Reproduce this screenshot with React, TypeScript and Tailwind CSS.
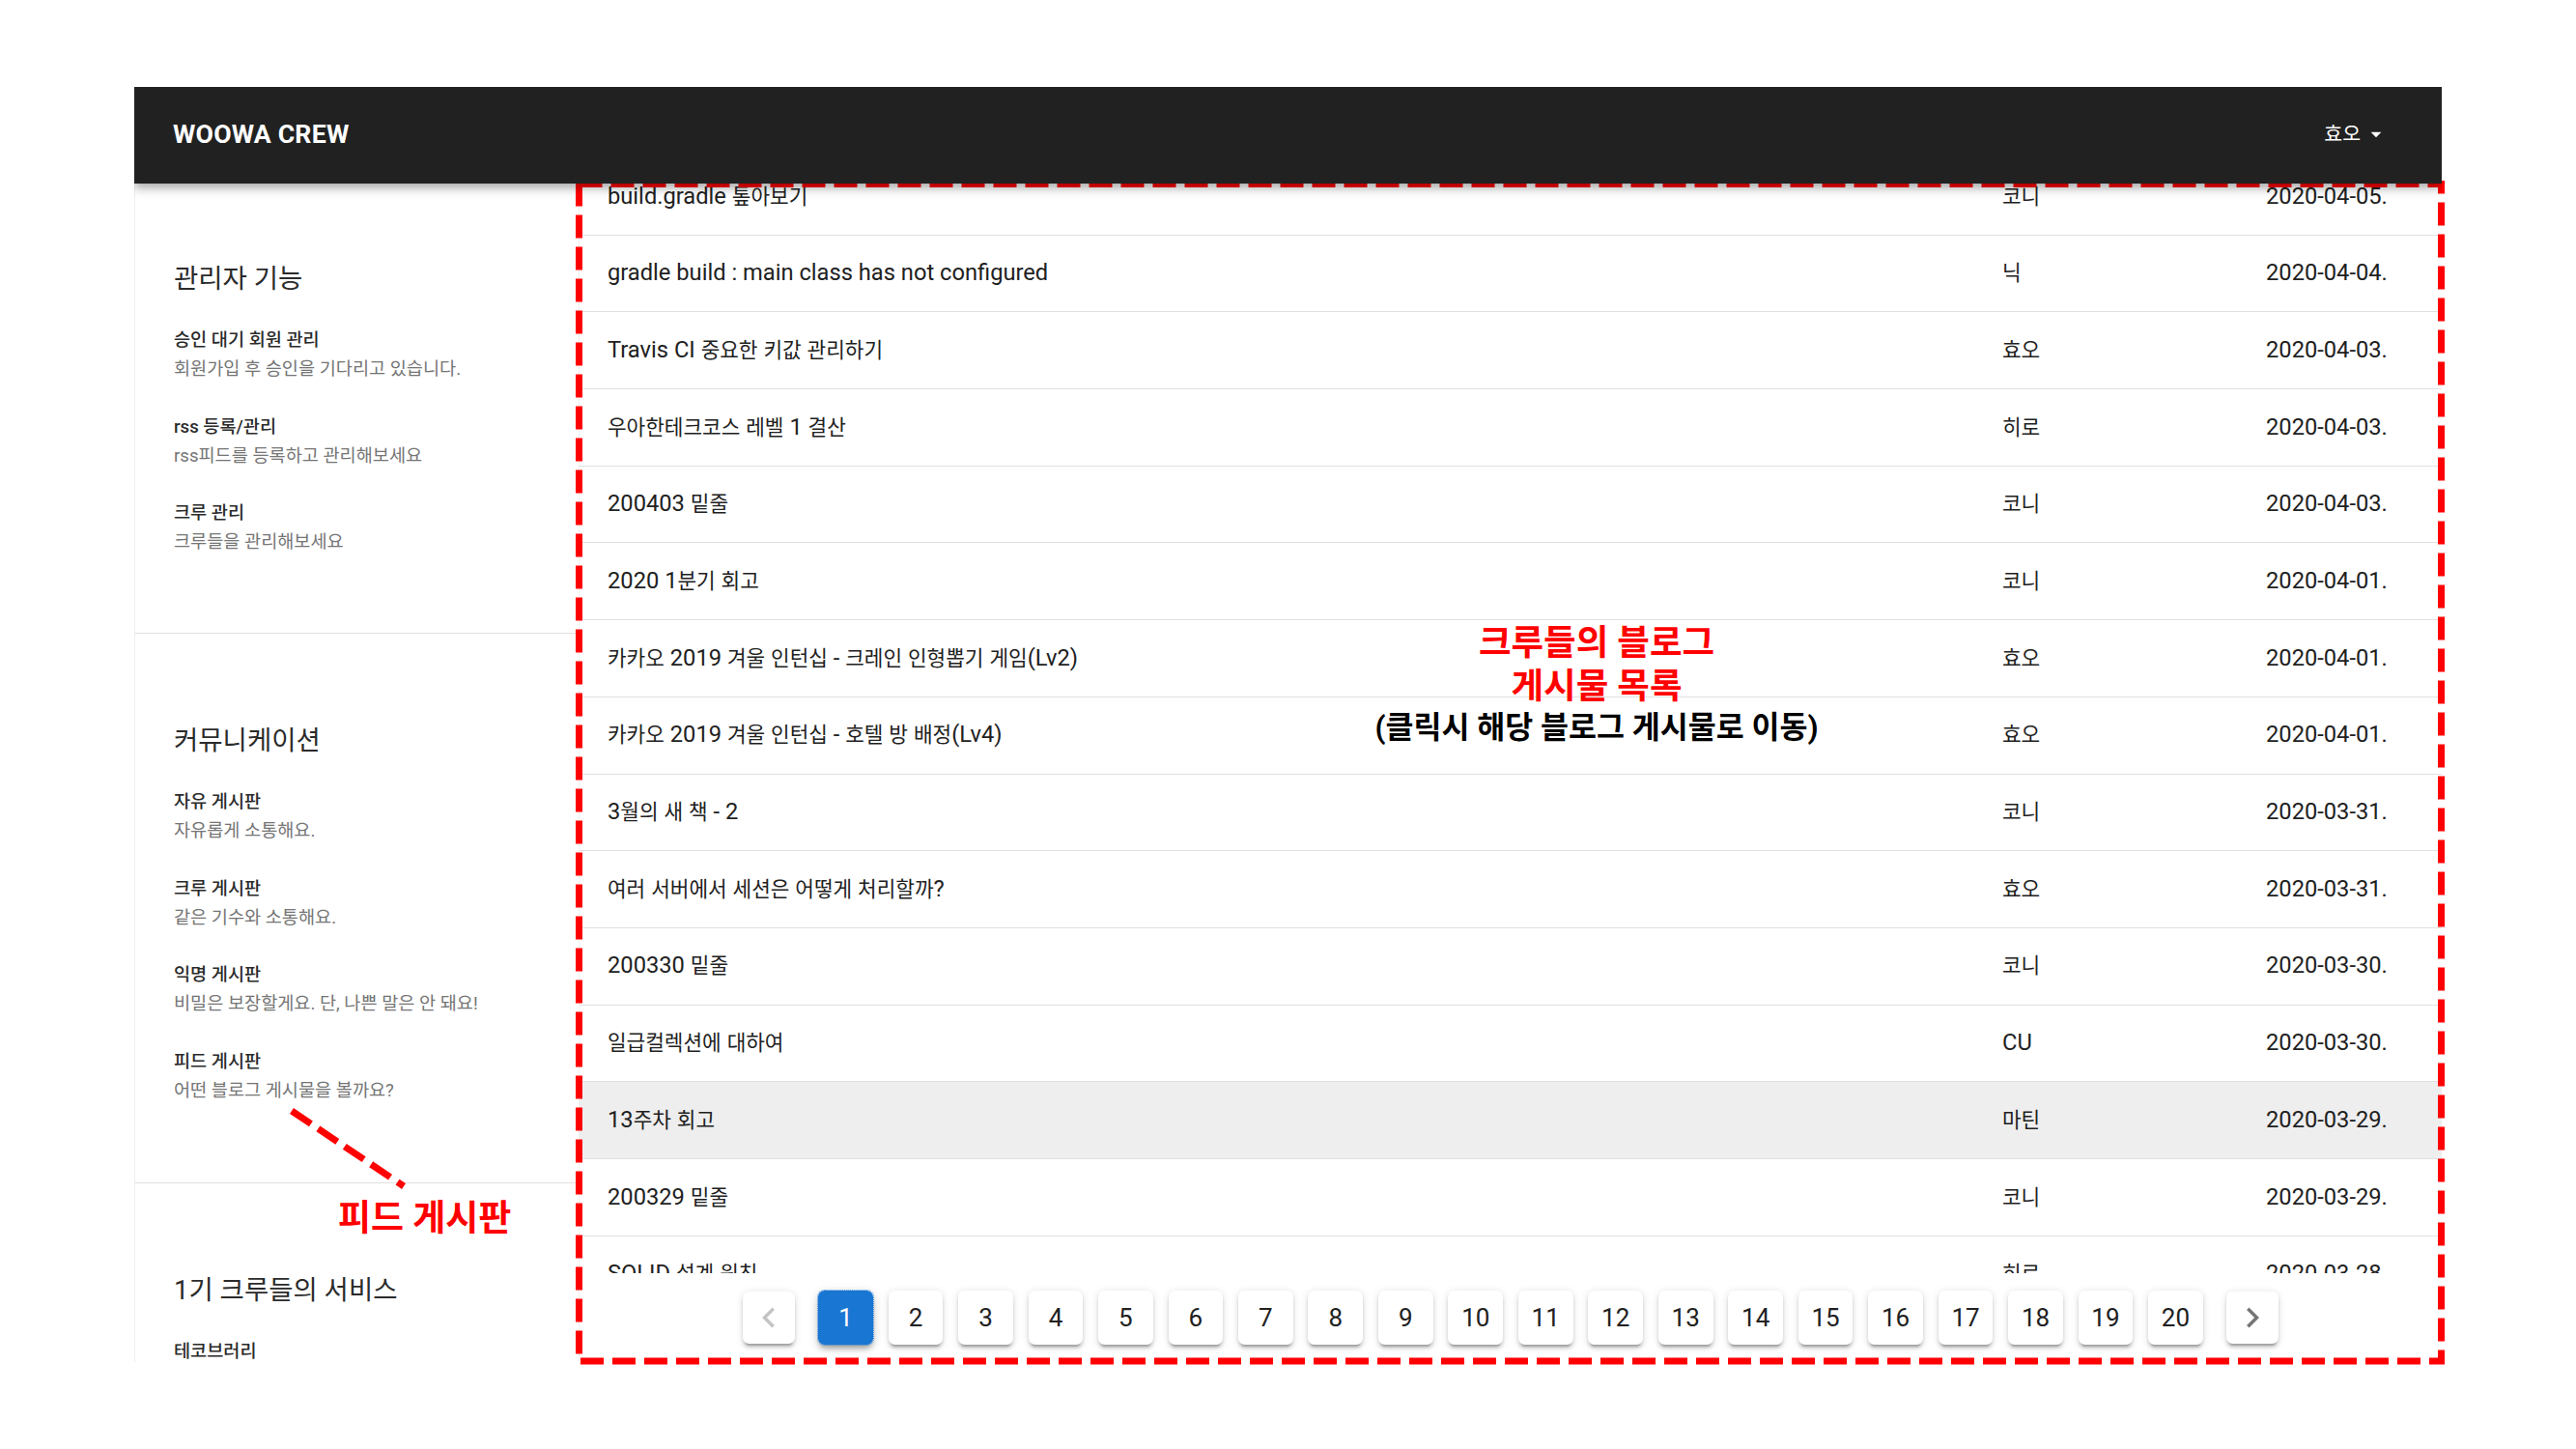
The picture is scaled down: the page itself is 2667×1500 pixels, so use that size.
import React from "react";

type Post = [string, string, string];

const posts: Post[] = [
  ["build.gradle 톺아보기", "코니", "2020-04-05."],
  ["gradle build : main class has not configured", "닉", "2020-04-04."],
  ["Travis CI 중요한 키값 관리하기", "효오", "2020-04-03."],
  ["우아한테크코스 레벨 1 결산", "히로", "2020-04-03."],
  ["200403 밑줄", "코니", "2020-04-03."],
  ["2020 1분기 회고", "코니", "2020-04-01."],
  ["카카오 2019 겨울 인턴십 - 크레인 인형뽑기 게임(Lv2)", "효오", "2020-04-01."],
  ["카카오 2019 겨울 인턴십 - 호텔 방 배정(Lv4)", "효오", "2020-04-01."],
  ["3월의 새 책 - 2", "코니", "2020-03-31."],
  ["여러 서버에서 세션은 어떻게 처리할까?", "효오", "2020-03-31."],
  ["200330 밑줄", "코니", "2020-03-30."],
  ["일급컬렉션에 대하여", "CU", "2020-03-30."],
  ["13주차 회고", "마틴", "2020-03-29."],
  ["200329 밑줄", "코니", "2020-03-29."],
  ["SOLID 설계 원칙", "히로", "2020-03-28."],
];

const sections: { title: string; items: [string, string][] }[] = [
  {
    title: "관리자 기능",
    items: [
      ["승인 대기 회원 관리", "회원가입 후 승인을 기다리고 있습니다."],
      ["rss 등록/관리", "rss피드를 등록하고 관리해보세요"],
      ["크루 관리", "크루들을 관리해보세요"],
    ],
  },
  {
    title: "커뮤니케이션",
    items: [
      ["자유 게시판", "자유롭게 소통해요."],
      ["크루 게시판", "같은 기수와 소통해요."],
      ["익명 게시판", "비밀은 보장할게요. 단, 나쁜 말은 안 돼요!"],
      ["피드 게시판", "어떤 블로그 게시물을 볼까요?"],
    ],
  },
  {
    title: "1기 크루들의 서비스",
    items: [["테코브러리", ""]],
  },
];

// hangul runs in the table are drawn a bit smaller than the latin text
function mixed(text: string) {
  return text
    .split(/([\u3130-\u318f\uac00-\ud7a3]+)/)
    .map((part, i) =>
      i % 2 === 1 ? (
        <span key={i} className="text-[0.9em]">
          {part}
        </span>
      ) : (
        part
      )
    );
}

function Chevron({ dir }: { dir: "left" | "right" }) {
  return (
    <svg viewBox="0 0 24 24" className="h-[42px] w-[42px]" fill="currentColor">
      <path
        d={
          dir === "left"
            ? "M15.41,16.58L10.83,12L15.41,7.41L14,6L8,12L14,18L15.41,16.58Z"
            : "M8.59,16.58L13.17,12L8.59,7.41L10,6L16,12L10,18L8.59,16.58Z"
        }
      />
    </svg>
  );
}

function Sidebar() {
  return (
    <aside className="flex w-[461px] shrink-0 flex-col border-l border-r border-[#eeeeee] bg-white">
      {sections.map((s, si) => (
        <div
          key={s.title}
          className={
            si === 0
              ? "pl-[40px] pt-[79px] pb-[79px]"
              : "border-t border-[#e0e0e0] pl-[40px] pt-[91px] pb-[80px]"
          }
        >
          <h2 className="text-[27.5px] leading-[40px] text-[#2b2b2b]">{s.title}</h2>
          <ul className="mt-[28px] flex flex-col gap-[29.5px]">
            {s.items.map(([name, desc]) => (
              <li key={name}>
                <p className="text-[18.6px] font-medium leading-[30px] text-[#2b2b2b]">{name}</p>
                {desc && <p className="text-[18.6px] leading-[30px] text-[#757575]">{desc}</p>}
              </li>
            ))}
          </ul>
        </div>
      ))}
    </aside>
  );
}

function Pagination() {
  const pages = Array.from({ length: 20 }, (_, i) => i + 1);
  return (
    <div className="flex flex-1 items-center justify-center">
      <button className="mx-[16.7px] flex h-[53.3px] w-[53.3px] items-center justify-center rounded-[6.7px] bg-white text-[#c4c4c4] shadow-[0_5px_1.7px_-3.3px_rgba(0,0,0,0.2),0_3.3px_3.3px_0_rgba(0,0,0,0.14),0_1.7px_8.3px_0_rgba(0,0,0,0.12)]">
        <Chevron dir="left" />
      </button>
      {pages.map((p) =>
        p === 1 ? (
          <button
            key={p}
            className="mx-[7.9px] flex h-[56.7px] min-w-[56.7px] items-center justify-center rounded-[6.7px] bg-[#1976d2] text-[26px] text-white outline-1 outline-dotted outline-[#3d8fe0] shadow-[0_5px_5px_-2px_rgba(0,0,0,0.25),0_4px_8px_0_rgba(0,0,0,0.14),0_2px_12px_0_rgba(0,0,0,0.12)]"
          >
            {p}
          </button>
        ) : (
          <button
            key={p}
            className="mx-[7.9px] flex h-[56.7px] min-w-[56.7px] items-center justify-center rounded-[6.7px] bg-white text-[26px] text-[#212121] shadow-[0_5px_1.7px_-3.3px_rgba(0,0,0,0.2),0_3.3px_3.3px_0_rgba(0,0,0,0.14),0_1.7px_8.3px_0_rgba(0,0,0,0.12)]"
          >
            {p}
          </button>
        )
      )}
      <button className="mx-[16.7px] flex h-[53.3px] w-[53.3px] items-center justify-center rounded-[6.7px] bg-white text-[#757575] shadow-[0_5px_1.7px_-3.3px_rgba(0,0,0,0.2),0_3.3px_3.3px_0_rgba(0,0,0,0.14),0_1.7px_8.3px_0_rgba(0,0,0,0.12)]">
        <Chevron dir="right" />
      </button>
    </div>
  );
}

export default function App() {
  return (
    <div className="relative h-[1500px] w-[2667px] overflow-hidden bg-white pl-[139px] pt-[90px] font-[Roboto,'Noto_Sans_CJK_KR',sans-serif]">
      <div className="flex h-[1320px] w-[2389px] flex-col overflow-hidden">
        <header className="relative z-10 flex h-[100px] shrink-0 items-center justify-between bg-[#212121] pb-[2px] pl-[40px] pr-[55px] shadow-[0_3px_7px_-2px_rgba(0,0,0,0.2),0_7px_8px_0_rgba(0,0,0,0.14),0_2px_16px_0_rgba(0,0,0,0.12)]">
          <span className="text-[26.7px] font-bold tracking-[0.2px] text-white">WOOWA CREW</span>
          <span className="flex items-center gap-[3px] text-[20.5px] text-white">
            효오
            <svg viewBox="0 0 24 24" className="h-[26px] w-[26px]" fill="currentColor">
              <path d="M7,10L12,15L17,10H7Z" />
            </svg>
          </span>
        </header>
        <div className="flex min-h-0 flex-1">
          <Sidebar />
          <main className="flex min-w-0 flex-1 flex-col bg-white">
            <div className="h-[1128px] shrink-0 overflow-hidden">
              <ul className="-mt-[26px]">
                {posts.map(([title, author, date], i) => (
                  <li
                    key={title}
                    className={
                      "flex h-[79.7px] items-center border-b border-[#e0e0e0] pl-[29px] pr-[40px] text-[23.7px] whitespace-nowrap text-[#212121]" +
                      (i === 12 ? " bg-[#eeeeee]" : "")
                    }
                  >
                    <span className="min-w-0 flex-1 truncate">{mixed(title)}</span>
                    <span className="w-[273px] shrink-0">{mixed(author)}</span>
                    <span className="w-[142px] shrink-0">{date}</span>
                  </li>
                ))}
              </ul>
            </div>
            <Pagination />
          </main>
        </div>
      </div>

      {/* red annotations drawn on top of the screenshot */}
      <svg
        className="pointer-events-none absolute left-0 top-0"
        width={2667}
        height={1500}
        fill="none"
        stroke="#ff0000"
        strokeWidth={7}
        strokeDasharray="24 9"
      >
        <rect x={599.5} y={190.5} width={1928} height={1218.5} />
        <line x1={302} y1={1150} x2={418} y2={1228} />
      </svg>
      <div className="absolute left-[350px] top-[1243px] text-[37px] font-bold leading-none text-[#ff0000]">
        피드 게시판
      </div>
      <div className="absolute left-[1253px] top-[643px] w-[800px] text-center font-bold">
        <p className="text-[36.5px] leading-[45px] text-[#ff0000]">크루들의 블로그</p>
        <p className="text-[36.5px] leading-[45px] text-[#ff0000]">게시물 목록</p>
        <p className="text-[31.5px] leading-[42px] text-black">(클릭시 해당 블로그 게시물로 이동)</p>
      </div>
    </div>
  );
}
